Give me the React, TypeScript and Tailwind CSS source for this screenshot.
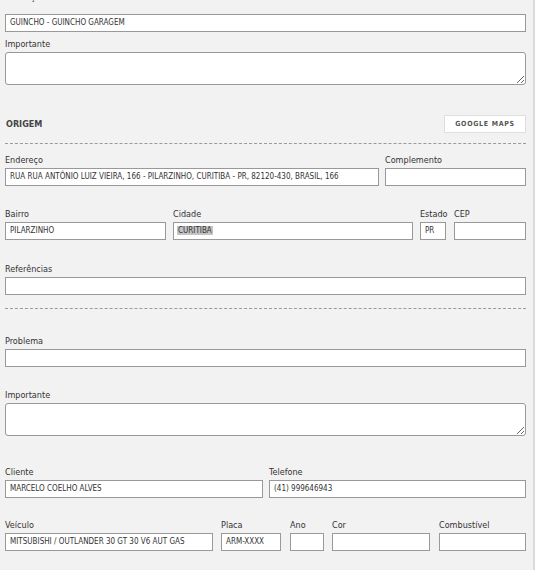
import React from 'react';

const Label = ({ text, className = '' }: { text: string; className?: string }) => (
  <div className={`text-[9px] leading-[12px] pt-[1px] text-[#333] whitespace-nowrap mb-[2px] ${className}`}>{text}</div>
);

const Field = ({ value, children }: { value?: string; children?: React.ReactNode }) => (
  <div className="h-[18px] border border-[#999] bg-white px-[4px] text-[8px] leading-[16px] text-[#333] whitespace-nowrap overflow-hidden">
    {children ?? value}
  </div>
);

const Area = () => (
  <textarea className="block w-full h-[33px] border border-[#999] rounded-[3px] bg-white resize-y outline-none" />
);

const Col = ({ label, w, ml = '', children }: { label: string; w: string; ml?: string; children: React.ReactNode }) => (
  <div className={`${w} ${ml} shrink-0`}>
    <Label text={label} />
    {children}
  </div>
);

const Dashed = ({ className = '' }: { className?: string }) => (
  <div className={`border-t border-dashed border-[#9a9a9a] h-0 ${className}`} />
);

export default function App() {
  return (
    <div className="flex h-[570px] overflow-hidden bg-white font-['DejaVu_Sans_Condensed','DejaVu_Sans',sans-serif]">
      <div className="w-[535px] shrink-0 bg-[#f2f2f2] border-r-2 border-[#dadada] pl-[5px] pr-[7px] overflow-hidden">
        <Label text="Descrição" className="mt-[-10px] mb-[11px]" />
        <Field value="GUINCHO - GUINCHO GARAGEM" />

        <Label text="Importante" className="mt-[5px]" />
        <Area />

        <div className="mt-[30px] h-[18px] flex items-center justify-between">
          <span className="pl-[1px] pt-[1px] text-[9px] font-bold text-[#444]">ORIGEM</span>
          <button className="h-[18px] w-[82px] bg-white border border-[#dedede] text-[7px] font-bold tracking-[0.7px] text-[#555]">
            GOOGLE MAPS
          </button>
        </div>

        <Dashed className="mt-[10px]" />

        <div className="flex mt-[9px]">
          <Col label="Endereço" w="w-[374px]">
            <Field value="RUA RUA ANTÔNIO LUIZ VIEIRA, 166 - PILARZINHO, CURITIBA - PR, 82120-430, BRASIL, 166" />
          </Col>
          <Col label="Complemento" w="w-[141px]" ml="ml-[6px]">
            <Field />
          </Col>
        </div>

        <div className="flex mt-[21px]">
          <Col label="Bairro" w="w-[161px]">
            <Field value="PILARZINHO" />
          </Col>
          <Col label="Cidade" w="w-[240px]" ml="ml-[7px]">
            <div className="h-[18px] border border-[#999] bg-white pl-[3px] text-[8px] leading-[16px] text-[#333] whitespace-nowrap overflow-hidden">
              <span className="bg-[#c4c4c4] px-[1px]">CURITIBA</span>
            </div>
          </Col>
          <Col label="Estado" w="w-[26px]" ml="ml-[7px]">
            <Field value="PR" />
          </Col>
          <Col label="CEP" w="w-[72px]" ml="ml-[8px]">
            <Field />
          </Col>
        </div>

        <div className="mt-[22px]">
          <Label text="Referências" />
          <Field />
        </div>

        <Dashed className="mt-[13px]" />

        <div className="mt-[25px]">
          <Label text="Problema" />
          <Field />
        </div>

        <Label text="Importante" className="mt-[21px]" />
        <Area />

        <div className="flex mt-[29px]">
          <Col label="Cliente" w="w-[258px]">
            <Field value="MARCELO COELHO ALVES" />
          </Col>
          <Col label="Telefone" w="w-[257px]" ml="ml-[6px]">
            <Field value="(41) 999646943" />
          </Col>
        </div>

        <div className="flex mt-[20px]">
          <Col label="Veículo" w="w-[208px]">
            <Field value="MITSUBISHI / OUTLANDER 30 GT 30 V6 AUT GAS" />
          </Col>
          <Col label="Placa" w="w-[60px]" ml="ml-[8px]">
            <Field value="ARM-XXXX" />
          </Col>
          <Col label="Ano" w="w-[34px]" ml="ml-[9px]">
            <Field />
          </Col>
          <Col label="Cor" w="w-[98px]" ml="ml-[8px]">
            <Field />
          </Col>
          <Col label="Combustível" w="w-[87px]" ml="ml-[9px]">
            <Field />
          </Col>
        </div>
      </div>
      <div className="flex-1 bg-white" />
    </div>
  );
}
